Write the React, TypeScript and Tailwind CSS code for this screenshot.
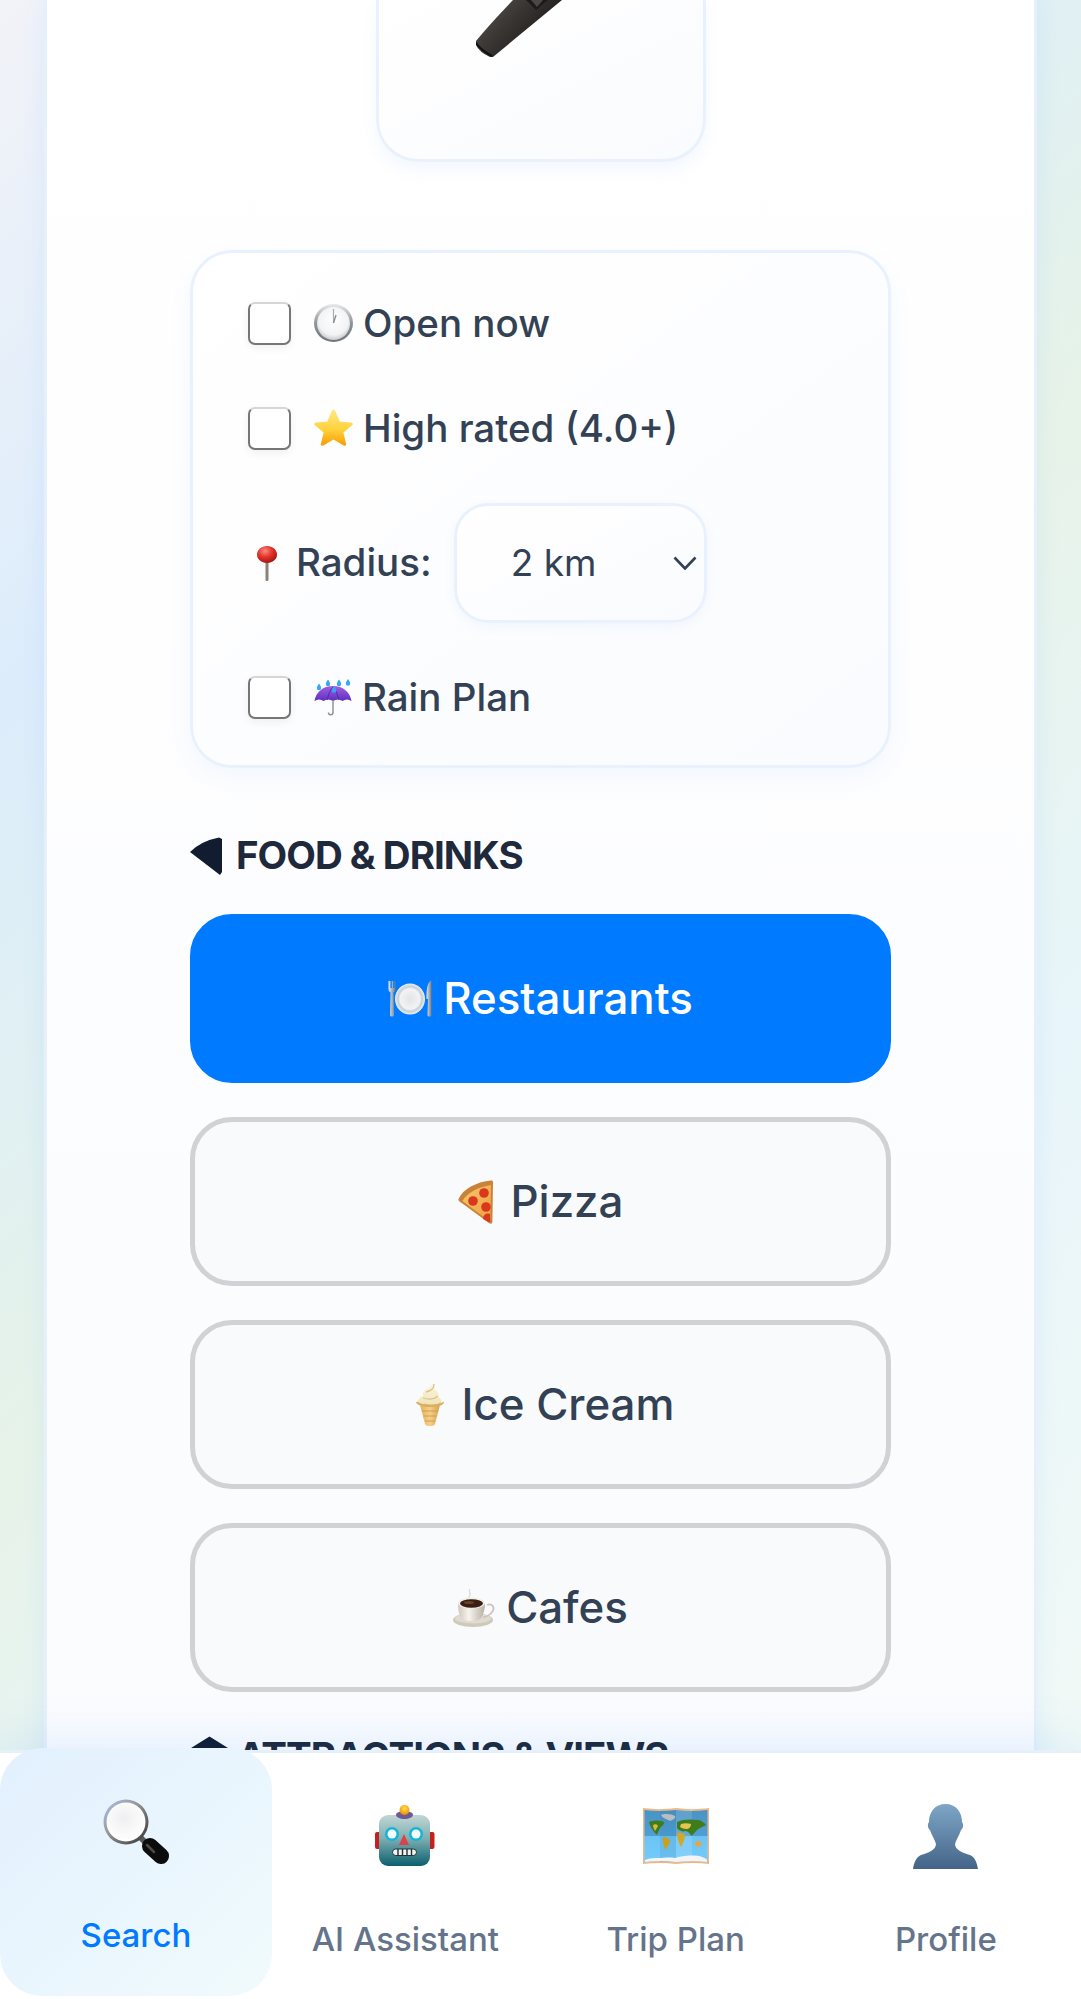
import type { ReactNode } from 'react';

function ClockIcon() {
  return (
    <svg width="39" height="38" viewBox="0 0 39 38">
      <defs>
        <linearGradient id="clockRing" x1="0" y1="0" x2="0" y2="1">
          <stop offset="0" stopColor="#e8eaec" />
          <stop offset="0.5" stopColor="#8f9498" />
          <stop offset="1" stopColor="#6f7478" />
        </linearGradient>
        <radialGradient id="clockFace" cx="0.5" cy="0.4" r="0.6">
          <stop offset="0" stopColor="#ffffff" />
          <stop offset="0.75" stopColor="#f2f3f4" />
          <stop offset="1" stopColor="#c6c9cc" />
        </radialGradient>
      </defs>
      <ellipse cx="19.5" cy="19" rx="19.5" ry="19" fill="url(#clockRing)" />
      <ellipse cx="19.5" cy="19.5" rx="16.5" ry="16.5" fill="url(#clockFace)" />
      <path d="M19.5 19V5" stroke="#a9adb1" strokeWidth="1.2" />
      <path d="M19.5 19l2.5-8" stroke="#8b8f93" strokeWidth="1.4" />
    </svg>
  );
}

function StarIcon() {
  return (
    <svg width="39" height="38" viewBox="0 0 39 38">
      <defs>
        <linearGradient id="starFill" x1="0" y1="0" x2="0" y2="1">
          <stop offset="0" stopColor="#ffe98a" />
          <stop offset="0.55" stopColor="#ffd23c" />
          <stop offset="1" stopColor="#f79c05" />
        </linearGradient>
      </defs>
      <path
        d="M19.5 0.5c1 0 1.6.8 2 1.8l4.2 10.3 11.3.9c1.8.2 2.4 1.6 1 2.8l-8.6 7.2 2.7 11.2c.4 1.7-.9 2.6-2.4 1.7L19.5 30.4l-10.2 6c-1.5.9-2.8 0-2.4-1.7l2.7-11.2L1 16.3c-1.4-1.2-.8-2.6 1-2.8l11.3-.9 4.2-10.3c.4-1 1-1.8 2-1.8z"
        fill="url(#starFill)"
      />
    </svg>
  );
}

function PinIcon() {
  return (
    <svg width="24" height="35" viewBox="0 0 24 35">
      <defs>
        <radialGradient id="pinBall" cx="0.4" cy="0.3" r="0.7">
          <stop offset="0" stopColor="#ff8a80" />
          <stop offset="0.5" stopColor="#e4352b" />
          <stop offset="1" stopColor="#a81612" />
        </radialGradient>
      </defs>
      <rect x="10.5" y="12" width="3" height="23" rx="1.2" fill="#8b8178" />
      <path d="M12 0c5.6 0 10 3.6 10 8.600 0 5-4.400 8.400-10 8.400S2 13.600 2 8.600C2 3.600 6.400 0 12 0z" fill="url(#pinBall)" />
    </svg>
  );
}

function UmbrellaIcon() {
  return (
    <svg width="38" height="37" viewBox="0 0 38 37">
      <defs>
        <linearGradient id="umbrellaFill" x1="0" y1="0" x2="0" y2="1">
          <stop offset="0" stopColor="#a45ee5" />
          <stop offset="1" stopColor="#5c2fc0" />
        </linearGradient>
      </defs>
      <path d="M19 7C9 7 2 13 0.500 22c3-2 6-2 9 0 3-2 6-2 9.500 0 3.500-2 6.500-2 9.500 0 3-2 6-2 9 0C36 13 29 7 19 7z" fill="url(#umbrellaFill)" />
      <path d="M19 8c-3 3-5 8-5.500 13M19 8c3 3 5 8 5.500 13" stroke="#3f1f96" strokeWidth="0.700" fill="none" />
      <path d="M19 21v12.500c0 3-4.500 3-4.500 0" stroke="#8d8d8d" strokeWidth="1.400" fill="none" />
      <path d="M5 4.500c1.200 2 2.200 3.200 2.200 4.500a2.200 2.200 0 0 1-4.400 0C2.800 7.700 3.800 6.500 5 4.500z" fill="#35a8f0" />
      <path d="M14 0.500c1.200 2 2.200 3.200 2.200 4.500a2.200 2.200 0 0 1-4.400 0c0-1.300 1-2.500 2.200-4.500z" fill="#35a8f0" />
      <path d="M20 7c1.200 2 2.200 3.200 2.200 4.500a2.200 2.200 0 0 1-4.400 0C17.800 10.200 18.800 9 20 7z" fill="#35a8f0" />
      <path d="M25 0.500c1.200 2 2.200 3.200 2.200 4.500a2.200 2.200 0 0 1-4.400 0c0-1.300 1-2.500 2.200-4.500z" fill="#35a8f0" />
      <path d="M34 0c1.200 2 2.200 3.200 2.200 4.500a2.200 2.200 0 0 1-4.400 0C31.800 3.200 32.800 2 34 0z" fill="#35a8f0" />
    </svg>
  );
}

function PlateIcon() {
  return (
    <svg width="44" height="37" viewBox="0 0 44 37">
      <defs>
        <linearGradient id="cutlery" x1="0" y1="0" x2="1" y2="0">
          <stop offset="0" stopColor="#e4e8ec" />
          <stop offset="1" stopColor="#6f7a86" />
        </linearGradient>
        <radialGradient id="plateFill" cx="0.5" cy="0.5" r="0.55">
          <stop offset="0" stopColor="#e2e4e6" />
          <stop offset="0.6" stopColor="#f2f3f5" />
          <stop offset="0.72" stopColor="#c7ced6" />
          <stop offset="1" stopColor="#ffffff" />
        </radialGradient>
      </defs>
      <path d="M0.500 1v8c0 2 1 3 2 3.500L2 35c0 2 4 2 4 0L5.500 12.500c1-.5 2-1.500 2-3.500V1H6.500v7H5.200V1H3.800v7H2.500V1z" fill="url(#cutlery)" />
      <ellipse cx="22" cy="19" rx="15" ry="15.500" fill="url(#plateFill)" />
      <path d="M42.500 0.500C39 4 38.500 10 38.500 19h1.500l-.5 16c0 2 4 2 4 0V1c0-.5-.5-.8-1-.5z" fill="url(#cutlery)" />
    </svg>
  );
}

function PizzaIcon() {
  return (
    <svg width="35" height="44" viewBox="0 0 35 44">
      <defs>
        <linearGradient id="pizzaCheese" x1="0" y1="0" x2="1" y2="1">
          <stop offset="0" stopColor="#f9c770" />
          <stop offset="1" stopColor="#ee9f3a" />
        </linearGradient>
      </defs>
      <path d="M33 0.500C18 2 5 9 0.500 19c-.3 1 0 1.600.8 2.200L31 43c2 1.400 3.400.6 3.400-1.400L35 2c0-1-.8-1.700-2-1.500z" fill="#c98238" />
      <path d="M33 5C20 7 9 13 4.500 21L31 41c.8.500 1.400.300 1.400-.600z" fill="url(#pizzaCheese)" />
      <circle cx="26" cy="13" r="4.800" fill="#d9381e" />
      <circle cx="15" cy="21" r="4.800" fill="#d9381e" />
      <circle cx="28" cy="27" r="4.800" fill="#d9381e" />
      <path d="M25 39a5 5 0 0 1 7-5l.3 7.500-1.300.7z" fill="#d9381e" />
    </svg>
  );
}

function IceCreamIcon() {
  return (
    <svg width="28" height="44" viewBox="0 0 28 44">
      <defs>
        <linearGradient id="cone" x1="0" y1="0" x2="1" y2="0">
          <stop offset="0" stopColor="#e6b25e" />
          <stop offset="0.5" stopColor="#f5cf88" />
          <stop offset="1" stopColor="#d9a24e" />
        </linearGradient>
        <linearGradient id="swirl" x1="0" y1="0" x2="0" y2="1">
          <stop offset="0" stopColor="#fbf6e2" />
          <stop offset="1" stopColor="#efe3b4" />
        </linearGradient>
      </defs>
      <path d="M4 22 L9 41c.6 2.800 9.400 2.800 10 0L24 22z" fill="url(#cone)" />
      <path d="M6 28h16M7.500 33h13M9 38h10" stroke="#c99443" strokeWidth="0.800" />
      <path d="M2 21c-1-4 2-7 5-8-1-4 2-7 6-8 1-2 3-4 5-5 1 3 1 5 1 7 3 1 4 4 3 7 3 1 4 4 3 7-4 3-19 3-23 0z" fill="url(#swirl)" />
      <path d="M18 1c0 4-3 7-8 8M22 13c-3 3-9 4-15 2M25 20c-4 2-11 3-17 1" stroke="#d6c58a" strokeWidth="1.300" fill="none" />
      <path d="M0 19.500c.500-1 1.500-1 2-.5 5 3.500 20 3.500 25 0 .500-.5 1-.3 1 .5-1 3-6 4.500-14 4.500S1.500 22 0 19.500z" fill="#dcae62" />
    </svg>
  );
}

function CoffeeIcon() {
  return (
    <svg width="42" height="38" viewBox="0 0 42 38">
      <defs>
        <linearGradient id="cupFill" x1="0" y1="0" x2="1" y2="0">
          <stop offset="0" stopColor="#cfc8bd" />
          <stop offset="0.4" stopColor="#f7f4ee" />
          <stop offset="1" stopColor="#b5aea2" />
        </linearGradient>
      </defs>
      <path d="M17 0c-2 2 1 4 0 6s-2 3 0 5" stroke="#dcdcdc" strokeWidth="1.400" fill="none" />
      <ellipse cx="20" cy="31" rx="20" ry="7" fill="#cfc9bc" />
      <ellipse cx="20" cy="29.500" rx="18" ry="5" fill="#e0dbd0" />
      <path d="M34 16c5-2 7.500 2 6 5.500-1.500 3.500-6 6-10 7" stroke="#c9c4b8" strokeWidth="1.800" fill="none" />
      <path d="M5 14c0 7 1 13 4 16 3 2.500 15 2.500 18 0 3-3 5-9 5-16z" fill="url(#cupFill)" />
      <ellipse cx="18.500" cy="14" rx="13.500" ry="5.500" fill="#f2efe8" />
      <ellipse cx="18.500" cy="14.500" rx="11.500" ry="4.200" fill="#3a1f14" />
      <ellipse cx="16" cy="13.500" rx="5" ry="1.500" fill="#6a4028" />
    </svg>
  );
}

function SearchIcon() {
  return (
    <svg width="66" height="66" viewBox="0 0 66 66">
      <defs>
        <linearGradient id="lensRing" x1="0" y1="0" x2="1" y2="1">
          <stop offset="0" stopColor="#a8c4ee" />
          <stop offset="0.4" stopColor="#9a9a9a" />
          <stop offset="1" stopColor="#2f2f2f" />
        </linearGradient>
        <radialGradient id="lensGlass" cx="0.45" cy="0.4" r="0.6">
          <stop offset="0" stopColor="#efeff1" />
          <stop offset="1" stopColor="#ffffff" />
        </radialGradient>
      </defs>
      <path d="M36 38l8 8" stroke="#5a5a5a" strokeWidth="6" />
      <path d="M47 48l11 10" stroke="#0c0c0c" strokeWidth="16" strokeLinecap="round" />
      <path d="M44 47l7 7" stroke="#4a4a4a" strokeWidth="2.500" strokeLinecap="round" />
      <circle cx="23" cy="24" r="22.500" fill="url(#lensRing)" />
      <circle cx="23" cy="24" r="19.500" fill="url(#lensGlass)" />
    </svg>
  );
}

function RobotIcon() {
  return (
    <svg width="60" height="62" viewBox="0 0 60 62">
      <defs>
        <linearGradient id="robotHead" x1="0" y1="0" x2="0" y2="1">
          <stop offset="0" stopColor="#c2d6d4" />
          <stop offset="0.45" stopColor="#7fb0b4" />
          <stop offset="1" stopColor="#0c5f6e" />
        </linearGradient>
        <radialGradient id="robotBulb" cx="0.5" cy="0.35" r="0.65">
          <stop offset="0" stopColor="#ffe14d" />
          <stop offset="1" stopColor="#f08a00" />
        </radialGradient>
      </defs>
      <rect x="0" y="27" width="6" height="17" rx="2" fill="#c5201c" />
      <rect x="53.500" y="27" width="6" height="17" rx="2" fill="#c5201c" />
      <rect x="4" y="10" width="51" height="51" rx="9" fill="url(#robotHead)" />
      <path d="M21 10c0-3 4-3.500 8.500-3.500S38 7 38 10c0 2-4 4-8.500 4S21 12 21 10z" fill="#6c5a96" />
      <circle cx="29.500" cy="5" r="5" fill="url(#robotBulb)" />
      <circle cx="17" cy="29" r="7" fill="#12b5d6" />
      <circle cx="17" cy="29" r="4.500" fill="#f4fbfd" />
      <circle cx="41" cy="29" r="7" fill="#12b5d6" />
      <circle cx="41" cy="29" r="4.500" fill="#f4fbfd" />
      <path d="M29 29l5 11H24z" fill="#d9434a" />
      <rect x="17.500" y="44" width="24" height="6.500" rx="3.200" fill="#f3f3ee" stroke="#20333a" strokeWidth="1" />
      <path d="M23 44v6.500M27.500 44v6.500M32 44v6.500M36.500 44v6.500" stroke="#20333a" strokeWidth="1.400" />
    </svg>
  );
}

function MapIcon() {
  return (
    <svg width="66" height="58" viewBox="0 0 66 58">
      <defs>
        <linearGradient id="mapSea" x1="0" y1="0" x2="0" y2="1">
          <stop offset="0" stopColor="#4a93c4" />
          <stop offset="0.5" stopColor="#4f9fd4" />
          <stop offset="0.51" stopColor="#6cc4f6" />
          <stop offset="1" stopColor="#74cbfa" />
        </linearGradient>
      </defs>
      <path d="M0 1c11 1.500 21 1.500 33 0 11 1.500 21 1.500 33 0v56c-11-1.500-22-1.500-33 0-11-1.500-22-1.500-33 0z" fill="#e9b98c" />
      <path d="M1.500 3c10 1.400 20 1.400 31.500 0 11 1.400 21 1.400 31.500 0v52c-11-1.400-21-1.400-31.500 0-11-1.400-21-1.400-31.500 0z" fill="url(#mapSea)" />
      <path d="M17 3.500h16V55H17z" fill="#1f6a9c" opacity="0.120" />
      <path d="M33 3h16v52H33z" fill="#ffffff" opacity="0.120" />
      <path d="M18 8c4-2 11-1 14 1 1 2-2 4-5 5-3-2-8-3-9-6z" fill="#b9bdbf" />
      <path d="M6 15c4-2 11-2 15 0 1 2-2 4-4 6-1 2-2 5-3 7-3-3-7-8-8-13z" fill="#3f7d1c" />
      <path d="M10 18c2-1 4-1 5 1-1 2-2 3-3 5-1-2-2-4-2-6z" fill="#dcb93c" />
      <path d="M20 30c3 0 7 2 7 4 0 3-3 6-4 9-2-3-4-9-3-13z" fill="#c9a11c" />
      <path d="M34 15c5-3 14-3 22-2 3 1 6 3 7 5-3 2-7 3-9 5-2 2-4 5-6 6-1-3-3-4-5-5-3 1-7 0-9-3 0-2 0-4 0-6z" fill="#3f7d1c" />
      <path d="M38 17c3-1 7-1 10 0 0 3-2 5-5 5-2 0-4-1-6-2z" fill="#e4c552" />
      <path d="M34 26c3-1 7 0 8 2 0 4-2 8-4 12-2-3-4-9-4-14z" fill="#cfa928" />
      <path d="M52 35c2-1 5-1 6 0 1 2 0 4-2 5-2 0-3-1-4-3z" fill="#f0a23a" />
      <path d="M2 53c5-2 9-2 13-2 6 0 11-1 17 0 6-2 13-2.500 19-2.500 5 0 9 1.500 13 4v2.500c-10-1.400-21-1.400-31 0-10-1.400-21-1.400-31 0z" fill="#f2f4f5" />
    </svg>
  );
}

function PersonIcon() {
  return (
    <svg width="65" height="65" viewBox="0 0 65 65">
      <defs>
        <linearGradient id="personFill" x1="0" y1="0" x2="0" y2="1">
          <stop offset="0" stopColor="#7fa6c6" />
          <stop offset="1" stopColor="#436488" />
        </linearGradient>
      </defs>
      <path
        d="M32.500 0C43 0 49 8 49 18c2 2 1 7-1 8-2 6-5 10-6 14 0 6 8 9 15 11 5 2 7 8 8 14H0c1-6 3-12 8-14 7-2 15-5 15-11-1-4-4-8-6-14-2-1-3-6-1-8C16 8 22 0 32.500 0z"
        fill="url(#personFill)"
      />
    </svg>
  );
}

function FilterRow({ icon, label }: { icon: ReactNode; label: string }) {
  return (
    <label className="flex h-[44px] items-center">
      <input
        type="checkbox"
        className="h-[43px] w-[43px] appearance-none rounded-[7px] border-2 border-[#767676] border-t-[#d6d6d6] bg-white shadow-[0_3px_8px_rgba(0,0,0,0.06)]"
      />
      <span className="ml-[23px] flex">{icon}</span>
      <span className="ml-[10px] text-[38.5px] font-medium leading-[44px] text-[#334155]">{label}</span>
    </label>
  );
}

function CategoryButton({
  icon,
  label,
  gap,
  active,
}: {
  icon: ReactNode;
  label: string;
  gap: string;
  active?: boolean;
}) {
  return (
    <button
      className={
        active
          ? 'flex h-[169px] w-[701px] items-center justify-center rounded-[42px] border-[5px] border-[#007aff] bg-[#007aff] text-[43.8px] font-medium text-white'
          : 'flex h-[169px] w-[701px] items-center justify-center rounded-[42px] border-[5px] border-[#d1d1d6] bg-[#f9fafc] text-[43.8px] font-medium text-[#334155]'
      }
    >
      <span className={`flex ${gap}`}>{icon}</span>
      {label}
    </button>
  );
}

function NavTab({ icon, label, active }: { icon: ReactNode; label: string; active?: boolean }) {
  return (
    <div
      className={
        active
          ? '-mt-[5px] flex h-[248px] w-[272px] flex-col items-center rounded-[42px] bg-gradient-to-br from-[#e2f0fe] to-[#f1fbfd] pt-[50px]'
          : 'flex flex-col items-center pt-[50px]'
      }
    >
      <div className="flex h-[66px] items-center justify-center">{icon}</div>
      <span
        className={
          active
            ? 'mt-[52px] text-[33px] font-medium leading-[38px] text-[#007aff]'
            : 'mt-[51px] text-[33px] font-medium leading-[38px] text-[#64748b]'
        }
      >
        {label}
      </span>
    </div>
  );
}

export default function App() {
  return (
    <div className="relative h-[1999px] w-full overflow-hidden bg-[linear-gradient(135deg,#f2f3f8_0%,#dcecfb_23%,#e0f0f3_35%,#e7f3e8_48%,#e8f5fa_68%,#f0f9f6_90%)] px-[44px] [font-family:Inter,sans-serif]">
      {/* main card */}
      <main className="flex h-full flex-col items-center border-x-[3px] border-[#e6f0fb] bg-gradient-to-b from-white to-[#fafbfe] shadow-[0_0_24px_rgba(0,122,255,0.07)]">
        <div className="h-[162px] w-[330px] rounded-b-[42px] border-x-[3px] border-b-[3px] border-[#e9f2fc] bg-gradient-to-br from-white to-[#fafbfe] shadow-[0_8px_16px_rgba(0,122,255,0.05)]">
          <svg className="ml-[97px]" width="90" height="60" viewBox="0 0 90 60">
            <defs>
              <linearGradient id="micBody" x1="0" y1="0" x2="1" y2="0.6">
                <stop offset="0" stopColor="#5a5654" />
                <stop offset="0.45" stopColor="#3a3634" />
                <stop offset="1" stopColor="#151413" />
              </linearGradient>
            </defs>
            <path d="M37 0 Q12 26 0 41 L0 45 Q3 52 14 57 L17 57 L86 0 Z" fill="url(#micBody)" />
            <path d="M0 43 Q5 50 16 56" stroke="#111" strokeWidth="2" fill="none" />
            <path d="M50 0 L60 10 L72 0 Z" fill="#1c1b1a" />
            <path d="M55 0 L61 7 L67 0 Z" fill="#4a4745" />
          </svg>
        </div>

        <section className="mt-[88px] flex h-[518px] w-[701px] flex-col rounded-[42px] border-[3px] border-[#e9f2fc] bg-gradient-to-br from-white to-[#fafbfe] pl-[55px] pt-[48px] shadow-[0_8px_24px_rgba(0,122,255,0.05)]">
          <FilterRow icon={<ClockIcon />} label="Open now" />
          <div className="mt-[61px]">
            <FilterRow icon={<StarIcon />} label="High rated (4.0+)" />
          </div>
          <div className="mt-[53px] flex items-center">
            <span className="ml-[7px] flex">
              <PinIcon />
            </span>
            <span className="ml-[17px] text-[38.5px] font-medium text-[#334155]">Radius:</span>
            <div className="ml-[22px] flex h-[120px] w-[253px] items-center rounded-[34px] border-[3px] border-[#e9f2fc] bg-gradient-to-br from-white to-[#fafbfe] pl-[54px] shadow-[0_4px_12px_rgba(0,122,255,0.05)]">
              <span className="text-[37px] text-[#334155]">2 km</span>
              <svg className="ml-[77px]" width="24" height="14" viewBox="0 0 24 14" fill="none">
                <path d="M1.500 1.500L12 12.500L22.500 1.500" stroke="#334155" strokeWidth="2.600" />
              </svg>
            </div>
          </div>
          <div className="mt-[52px]">
            <FilterRow icon={<UmbrellaIcon />} label="Rain Plan" />
          </div>
        </section>

        <div className="w-[701px]">
          <h2 className="mt-[66px] flex h-[44px] items-center text-[38.5px] font-bold uppercase tracking-[-1px] text-[#1e293b]">
            <svg className="mr-[14px]" width="32" height="38" viewBox="0 0 32 38">
              <path d="M0 15Q11 4 29 0.500L32 2V35L30 38Z" fill="#111c30" />
            </svg>
            Food &amp; Drinks
          </h2>
          <div className="mt-[36px] flex flex-col gap-[34px]">
            <CategoryButton active icon={<PlateIcon />} label="Restaurants" gap="mr-[11px]" />
            <CategoryButton icon={<PizzaIcon />} label="Pizza" gap="mr-[18px]" />
            <CategoryButton icon={<IceCreamIcon />} label="Ice Cream" gap="ml-[9px] mr-[18px]" />
            <CategoryButton icon={<CoffeeIcon />} label="Cafes" gap="mr-[11px]" />
          </div>
          <h2 className="mt-[43px] flex h-[44px] items-center text-[38.5px] font-bold uppercase tracking-[-1px] text-[#1e293b]">
            <svg className="mb-[10px] ml-[1px] mr-[9px]" width="37" height="32" viewBox="0 0 38 32">
              <path d="M19 0L38 12H32V32H6V12H0Z" fill="#111c30" />
            </svg>
            Attractions &amp; Views
          </h2>
        </div>
      </main>

      {/* bottom nav */}
      <nav className="absolute inset-x-0 bottom-0 grid h-[249px] grid-cols-4 border-t-[3px] border-[#e6f0fb] bg-white shadow-[0_-8px_50px_rgba(0,122,255,0.1)]">
        <NavTab active icon={<SearchIcon />} label="Search" />
        <NavTab icon={<RobotIcon />} label="AI Assistant" />
        <NavTab icon={<MapIcon />} label="Trip Plan" />
        <NavTab icon={<PersonIcon />} label="Profile" />
      </nav>
    </div>
  );
}
